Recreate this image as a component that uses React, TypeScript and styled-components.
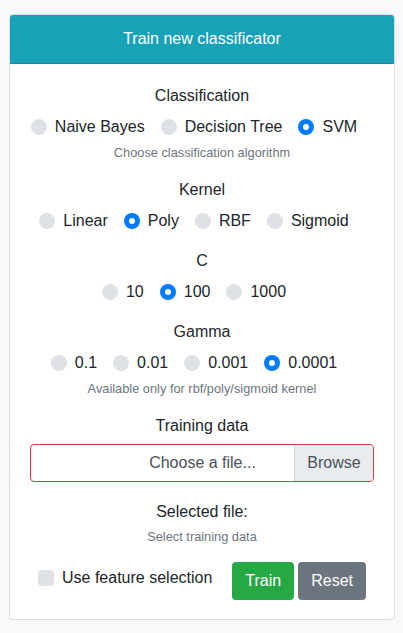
import React, { useState } from "react";
import styled, { createGlobalStyle } from "styled-components";

const Global = createGlobalStyle`
  html, body { margin: 0; padding: 0; background: #f8f9fa; }
  body {
    font-family: "Liberation Sans", Arial, sans-serif;
    font-size: 16px;
    line-height: 1.5;
    color: #212529;
  }
  * { box-sizing: border-box; }
`;

const Page = styled.div`
  padding: 14px 8px 12px 9px;
`;

const Card = styled.div`
  background: #fff;
  border: 1px solid rgba(0, 0, 0, 0.125);
  border-radius: 4px;
  overflow: hidden;
`;

const CardHeader = styled.div`
  background: #17a2b8;
  color: #fff;
  text-align: center;
  padding: 12px 20px;
  border-bottom: 1px solid rgba(0, 0, 0, 0.125);
`;

const CardBody = styled.div`
  padding: 20px 20px 19px 20px;
  text-align: center;
`;

const Group = styled.div`
  margin-bottom: 16px;
`;

const Label = styled.div<{ $tight?: boolean }>`
  margin-bottom: ${(p) => (p.$tight ? "6px" : "7px")};
`;

const Options = styled.div`
  display: flex;
  justify-content: center;
  flex-wrap: wrap;
`;

const Option = styled.label`
  display: inline-flex;
  align-items: center;
  margin-right: 16px;
  cursor: pointer;
`;

const RadioDot = styled.span<{ $checked: boolean }>`
  width: 16px;
  height: 16px;
  border-radius: 50%;
  margin-right: 8px;
  background: ${(p) => (p.$checked ? "#007bff" : "#dee2e6")};
  display: inline-flex;
  align-items: center;
  justify-content: center;
  flex: none;
  &::after {
    content: "";
    width: 6px;
    height: 6px;
    border-radius: 50%;
    background: ${(p) => (p.$checked ? "#fff" : "transparent")};
  }
`;

const Help = styled.small`
  display: block;
  margin-top: 4px;
  font-size: 12.8px;
  color: #6c757d;
  line-height: 1.5;
`;

const FileInput = styled.div`
  display: flex;
  height: 38px;
  border: 1px solid #dc3545;
  border-radius: 4px;
  overflow: hidden;
`;

const FileText = styled.div`
  flex: 1;
  display: flex;
  align-items: center;
  justify-content: center;
  color: #495057;
  padding-left: 80px;
`;

const Browse = styled.div`
  width: 79px;
  background: #e9ecef;
  border-left: 1px solid #ced4da;
  color: #495057;
  display: flex;
  align-items: center;
  justify-content: center;
`;

const SelectedGroup = styled.div`
  margin-top: 18px;
  margin-bottom: 15px;
`;

const Selected = styled.div``;

const SelectedHelp = styled.small`
  display: block;
  margin-top: 3px;
  font-size: 12.8px;
  line-height: 1.5;
  color: #6c757d;
`;

const Actions = styled.div`
  display: flex;
  justify-content: center;
  align-items: center;
`;

const CheckLabel = styled.label`
  display: inline-flex;
  align-items: center;
  margin-right: 20px;
  margin-top: -6px;
`;

const CheckBox = styled.span`
  width: 16px;
  height: 16px;
  border-radius: 4px;
  background: #dee2e6;
  margin-right: 8px;
`;

const Button = styled.button<{ $variant: "success" | "secondary" }>`
  font-family: inherit;
  font-size: 16px;
  line-height: 1.5;
  height: 38px;
  padding: 6px 12px;
  border: 1px solid transparent;
  border-radius: 4px;
  color: #fff;
  background: ${(p) => (p.$variant === "success" ? "#28a745" : "#6c757d")};
  margin-left: ${(p) => (p.$variant === "secondary" ? "4px" : "0")};
  cursor: pointer;
`;

type RadioGroupProps = {
  options: string[];
  value: string;
  onChange: (v: string) => void;
};

function RadioGroup({ options, value, onChange }: RadioGroupProps) {
  return (
    <Options>
      {options.map((o) => (
        <Option key={o} onClick={() => onChange(o)}>
          <RadioDot $checked={value === o} />
          {o}
        </Option>
      ))}
    </Options>
  );
}

export default function App() {
  const [cls, setCls] = useState("SVM");
  const [kernel, setKernel] = useState("Poly");
  const [c, setC] = useState("100");
  const [gamma, setGamma] = useState("0.0001");

  return (
    <>
      <Global />
      <Page>
        <Card>
          <CardHeader>Train new classificator</CardHeader>
          <CardBody>
            <Group>
              <Label>Classification</Label>
              <RadioGroup options={["Naive Bayes", "Decision Tree", "SVM"]} value={cls} onChange={setCls} />
              <Help>Choose classification algorithm</Help>
            </Group>
            <Group>
              <Label>Kernel</Label>
              <RadioGroup options={["Linear", "Poly", "RBF", "Sigmoid"]} value={kernel} onChange={setKernel} />
            </Group>
            <Group>
              <Label>C</Label>
              <RadioGroup options={["10", "100", "1000"]} value={c} onChange={setC} />
            </Group>
            <Group>
              <Label>Gamma</Label>
              <RadioGroup options={["0.1", "0.01", "0.001", "0.0001"]} value={gamma} onChange={setGamma} />
              <Help>Available only for rbf/poly/sigmoid kernel</Help>
            </Group>
            <Group>
              <Label $tight>Training data</Label>
              <FileInput>
                <FileText>Choose a file...</FileText>
                <Browse>Browse</Browse>
              </FileInput>
            </Group>
            <SelectedGroup>
              <Selected>Selected file:</Selected>
              <SelectedHelp>Select training data</SelectedHelp>
            </SelectedGroup>
            <Actions>
              <CheckLabel>
                <CheckBox />
                Use feature selection
              </CheckLabel>
              <Button $variant="success">Train</Button>
              <Button $variant="secondary">Reset</Button>
            </Actions>
          </CardBody>
        </Card>
      </Page>
    </>
  );
}
